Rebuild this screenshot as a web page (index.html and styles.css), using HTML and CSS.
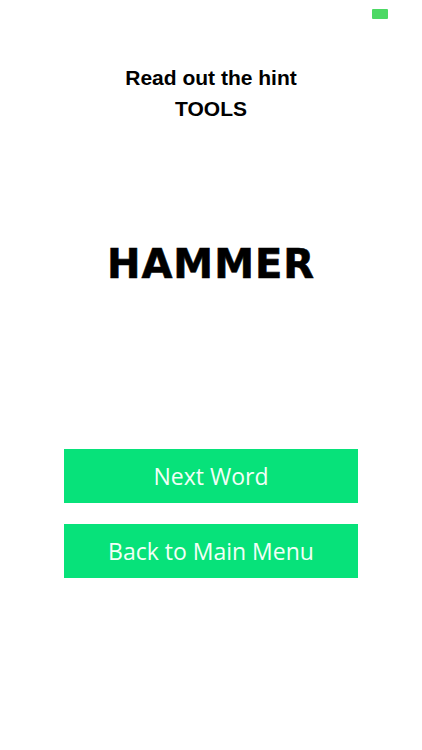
FILE: index.html
```html
<!DOCTYPE html>
<html>
<head>
<meta charset="utf-8">
<link rel="stylesheet" href="styles.css">
</head>
<body>
<div class="screen">
  <div class="statusbar"><span class="battery"></span></div>
  <div class="hint">
    <div class="hint-line">Read out the hint</div>
    <div class="hint-line">TOOLS</div>
  </div>
  <div class="word">HAMMER</div>
  <div class="actions">
    <button class="btn">Next Word</button>
    <button class="btn">Back to Main Menu</button>
  </div>
</div>
</body>
</html>
```

FILE: styles.css
```css
html, body {
  margin: 0;
  padding: 0;
  background: #ffffff;
}
.screen {
  width: 422px;
  height: 750px;
  display: flex;
  flex-direction: column;
  align-items: center;
  font-family: "Liberation Sans", Arial, sans-serif;
}
.statusbar {
  align-self: stretch;
  height: 20px;
  display: flex;
  justify-content: flex-end;
  align-items: flex-start;
  padding: 9px 34px 0 0;
  box-sizing: border-box;
}
.battery {
  width: 16px;
  height: 10px;
  background: #4cd964;
  border-radius: 1px;
}
.hint {
  margin-top: 42px;
  text-align: center;
  color: #000;
}
.hint-line {
  font-size: 21px;
  font-weight: bold;
  line-height: 31px;
}
.word {
  margin-top: 112px;
  font-family: "DejaVu Sans", sans-serif;
  font-weight: bold;
  font-size: 40px;
  line-height: 56px;
  letter-spacing: 1px;
  color: #000;
  -webkit-text-stroke: 0.6px #000;
}
.actions {
  margin-top: 157px;
  display: flex;
  flex-direction: column;
  gap: 21px;
}
.btn {
  width: 294px;
  height: 54px;
  border: none;
  margin: 0;
  padding: 0;
  background: #07e27a;
  color: #f2fff7;
  font-family: "Open Sans", "Liberation Sans", sans-serif;
  font-size: 23px;
  font-weight: normal;
}
```
